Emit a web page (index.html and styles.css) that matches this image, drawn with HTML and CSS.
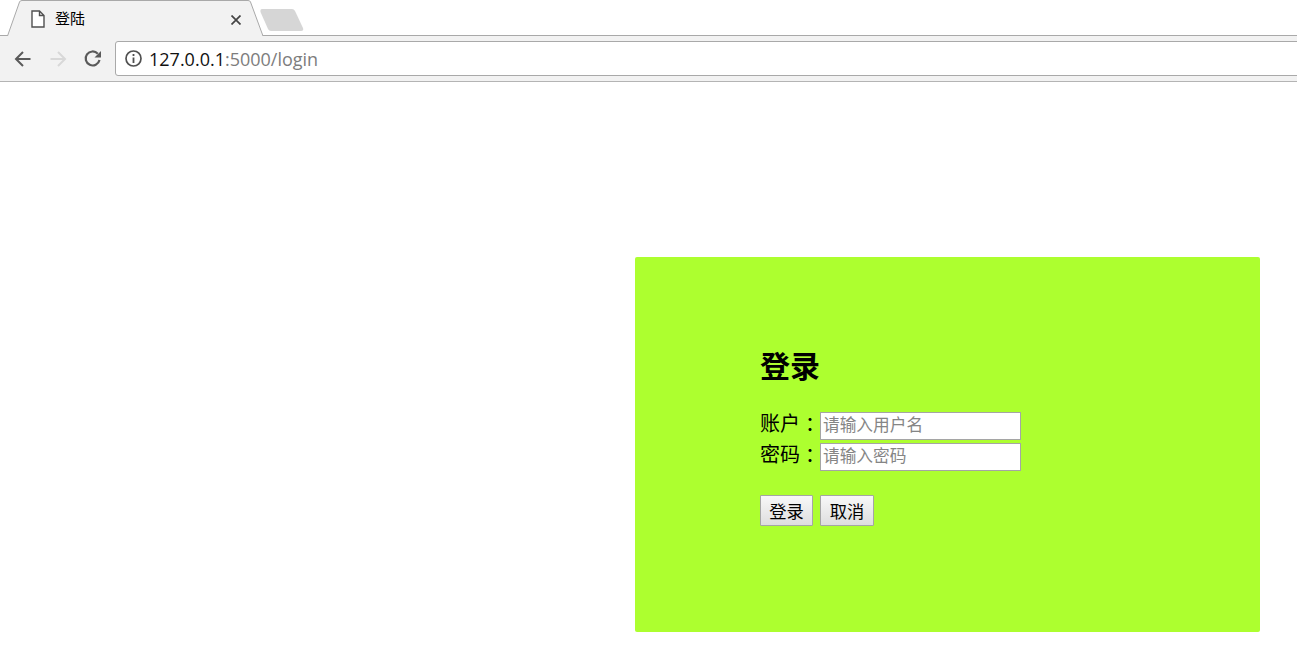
FILE: index.html
```html
<!DOCTYPE html>
<html lang="zh-CN">
<head>
<meta charset="utf-8">
<title>登陆</title>
<link rel="stylesheet" href="styles.css">
</head>
<body>
<header class="chrome">
  <div class="tabstrip">
    <div class="tab">
      <svg class="tab-shape" width="258" height="37" viewBox="0 0 258 37"><path d="M0.5 36 L12.5 2 Q13 0.5 15 0.5 H241 Q243 0.5 243.5 2 L256 36" fill="#f2f2f2" stroke="#a9a9a9"/></svg>
      <svg class="tab-icon" width="14" height="18" viewBox="0 0 14 18"><path d="M1 1 H8.500 L13 5.500 V17 H1 Z M8.500 1 V5.500 H13" fill="#fff" stroke="#505050" stroke-width="1.400"/></svg>
      <span class="tab-title">登陆</span>
      <svg class="tab-close" width="10" height="10" viewBox="0 0 10 10"><path d="M0.500 0.500 L9.500 9.500 M9.500 0.500 L0.500 9.500" stroke="#444" stroke-width="1.700"/></svg>
    </div>
    <svg class="newtab" width="46" height="24" viewBox="0 0 46 24"><path d="M3 1 H33 Q35 1 36 3 L44 20 Q45 23 42 23 H12 Q10 23 9 21 L1.500 4 Q1 1 3 1 Z" fill="#d6d6d6"/></svg>
  </div>
  <div class="toolbar">
    <svg class="nav-icon" width="20" height="20" viewBox="0 0 20 20"><path d="M17.500 10 H3.500 M10 3 L3 10 L10 17" fill="none" stroke="#5a5a5a" stroke-width="2"/></svg>
    <svg class="nav-icon" width="20" height="20" viewBox="0 0 20 20"><path d="M2.500 10 H16.500 M10 3 L17 10 L10 17" fill="none" stroke="#d8d8d8" stroke-width="2"/></svg>
    <svg class="nav-icon" width="20" height="20" viewBox="0 0 20 20"><path d="M16.500 11 A7 7 0 1 1 14.800 4.700" fill="none" stroke="#5a5a5a" stroke-width="2.200"/><path d="M11.500 8.500 H18 V2 Z" fill="#5a5a5a"/></svg>
    <div class="omnibox">
      <svg class="info" width="17" height="17" viewBox="0 0 17 17"><circle cx="8.500" cy="8.500" r="7.500" fill="none" stroke="#505050" stroke-width="1.700"/><path d="M8.500 7.500 V13 M8.500 4 V6" stroke="#505050" stroke-width="1.800"/></svg>
      <span class="url-host">127.0.0.1</span><span class="url-rest">:5000/login</span>
    </div>
  </div>
</header>
<main class="page">
  <section class="card">
    <h2 class="title">登录</h2>
    <form class="form">
      <div class="row"><label class="label">账户<span class="colon">：</span></label><input class="input" placeholder="请输入用户名"></div>
      <div class="row"><label class="label">密码<span class="colon">：</span></label><input class="input" placeholder="请输入密码"></div>
      <div class="actions">
        <button class="btn" type="button">登录</button>
        <button class="btn btn-cancel" type="button">取消</button>
      </div>
    </form>
  </section>
</main>
</body>
</html>
```
FILE: styles.css
```css
* { box-sizing: border-box; }
html, body { margin: 0; padding: 0; height: 100%; overflow: hidden; background: #fff; }
body { font-family: "Noto Sans CJK SC", "Liberation Sans", sans-serif; color: #000; }

.chrome { height: 82px; border-bottom: 1px solid #b4b4b4; background: #f2f2f2; }
.tabstrip { height: 36px; background: #fff; border-bottom: 1px solid #a9a9a9; display: flex; padding-left: 7px; }
.tab { position: relative; width: 258px; height: 36px; display: flex; align-items: center; padding-left: 24px; }
.tab-shape { position: absolute; left: 0; top: 0; }
.tab-icon { position: relative; margin-top: 2px; }
.tab-title { position: relative; margin-left: 10px; font-size: 15px; line-height: 20px; width: 176px; }
.tab-close { position: relative; margin-top: 3px; }
.newtab { margin: 8px 0 0 -6px; }

.toolbar { height: 45px; display: flex; align-items: center; padding-left: 13px; }
.nav-icon { margin-right: 15px; flex: none; }
.nav-icon:nth-child(3) { margin-right: 12px; }
.omnibox { flex: 1; height: 35px; margin-right: -8px; background: #fff; border: 1px solid #a9a9a9; border-radius: 3px; display: flex; align-items: center; padding-left: 9px; font-family: "Open Sans", "Noto Sans", sans-serif; font-size: 18px; white-space: nowrap; }
.info { margin-right: 7px; flex: none; }
.url-host { color: #111; }
.url-rest { color: #7d7d7d; }

.page { padding: 175px 37px 0 635px; }
.card { height: 375px; background: #adff2f; border-radius: 2px; padding: 92px 0 0 125px; }
.title { margin: 0; font-size: 30px; line-height: 30px; font-weight: 700; }
.form { margin-top: 33px; }
.row { display: flex; align-items: flex-start; height: 28px; margin-bottom: 3px; }
.label { width: 60px; font-size: 20px; line-height: 22px; white-space: nowrap; }
.colon { display: inline-block; width: 20px; padding-left: 5px; }
.input { width: 201px; height: 28px; border: 1px solid #a5a5a5; background: #fff; padding: 0 2px 5px; font-family: "Noto Sans CJK SC", sans-serif; font-size: 16.700px; outline: none; }
.input::placeholder { color: #858585; opacity: 1; }
.actions { display: flex; margin-top: 24px; }
.btn { width: 53px; height: 31px; padding: 0; border: 1px solid #a5a5a5; border-radius: 1px; background: linear-gradient(#f8f8f8, #dedede); font-family: "Noto Sans CJK SC", sans-serif; font-size: 17.300px; color: #000; }
.btn-cancel { width: 54px; margin-left: 7px; }
```
